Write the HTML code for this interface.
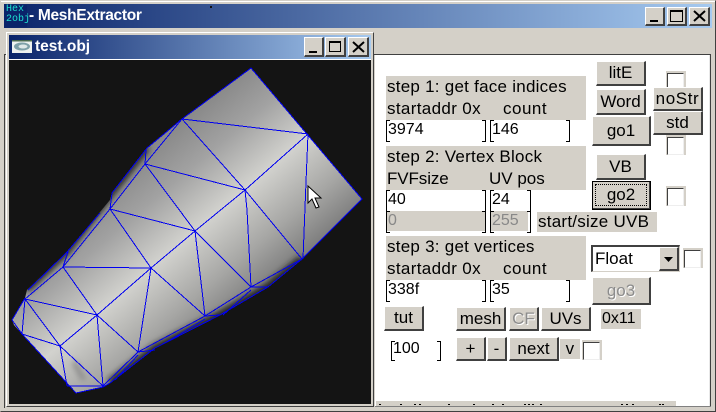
<!DOCTYPE html>
<html><head><meta charset="utf-8">
<style>
html,body{margin:0;padding:0;width:716px;height:412px;overflow:hidden;background:#d4d0c8}
*{box-sizing:border-box}
body{font-family:"Liberation Sans",sans-serif;color:#000;position:relative}
div,span{position:absolute}
.t{white-space:nowrap;font-size:17px;line-height:22px;letter-spacing:.25px}
.g{background:#d4d0c8}
.b{background:#d4d0c8;border-top:1px solid #fff;border-left:1px solid #fff;border-right:2px solid #404040;border-bottom:2px solid #404040;text-align:center;font-size:17px;white-space:nowrap;display:flex;align-items:center;justify-content:center}
.i{background:#fff;height:20px;font-size:16px;line-height:20px;padding-left:2px}
.i:before,.i:after{content:"";position:absolute;top:0;height:100%;width:3px;border-top:1px solid #000;border-bottom:1px solid #000}
.i:before{left:0;border-left:1px solid #000}
.i:after{right:0;border-right:1px solid #000}
.c{width:20px;height:20px;background:#d4d0c8}
.c:after{content:"";position:absolute;left:1px;top:2px;width:15px;height:16px;background:#fff;border-top:1px solid #404040;border-left:1px solid #404040;border-right:1px solid #eee;border-bottom:1px solid #eee}
.w{background:#d4d0c8;border-top:1px solid #fff;border-left:1px solid #fff;border-right:2px solid #404040;border-bottom:2px solid #404040;display:block}
.d{width:2px;height:1px;background:#000;top:404px}
</style></head>
<body>
<!-- main frame -->
<div style="left:0;top:0;width:716px;height:412px;border:1px solid;border-color:#d4d0c8 #404040 #404040 #d4d0c8;background:#d4d0c8"></div>
<div style="left:1px;top:1px;width:714px;height:1px;background:#fff"></div>
<div style="left:4px;top:4px;width:708px;height:24px;background:linear-gradient(90deg,#0a246a,#a6caf0)"></div>
<div style="left:210px;top:6px;width:2px;height:2px;background:#111"></div>
<div style="left:6px;top:5px;width:21px;height:22px;background:#0a246a;font:10px/10px 'Liberation Mono',monospace;color:#1de0d0">Hex<br>2obj</div>
<div class="t" style="left:29px;top:5px;font-size:15.5px;font-weight:bold;color:#fff;line-height:22px;letter-spacing:-.3px">- MeshExtractor</div>
<!-- main caption btns -->
<div class="w" style="left:645px;top:7px;width:20px;height:19px"><span style="left:4px;top:12px;width:8px;height:2px;background:#000"></span></div>
<div class="w" style="left:667px;top:7px;width:20px;height:19px"><span style="left:2px;top:2px;width:13px;height:12px;border:1px solid #000;border-top-width:2px"></span></div>
<div class="w" style="left:689px;top:7px;width:21px;height:19px"><svg style="position:absolute;left:3px;top:2px" width="13" height="12"><path d="M1 1L12 11M12 1L1 11" stroke="#000" stroke-width="2"/></svg></div>
<!-- inner borders -->
<div style="left:4px;top:54px;width:706px;height:1px;background:#404040"></div>
<div style="left:4px;top:54px;width:1px;height:354px;background:#404040"></div>
<!-- client -->
<div style="left:375px;top:55px;width:334px;height:351px;background:#fff"></div>
<div style="left:709px;top:55px;width:1px;height:351px;background:#e8e8e8"></div>
<div style="left:710px;top:54px;width:1px;height:353px;background:#404040"></div>
<div style="left:375px;top:406px;width:336px;height:1px;background:#808080"></div>
<!-- child window -->
<div style="left:6px;top:32px;width:368px;height:375px;background:#d4d0c8;border-top:1px solid #fff;border-left:1px solid #fff;border-right:1px solid #404040;border-bottom:1px solid #404040"></div>
<div style="left:9px;top:35px;width:362px;height:24px;background:linear-gradient(90deg,#0a246a,#a6caf0)"></div>
<div style="left:9px;top:59px;width:362px;height:1px;background:#fff"></div>
<svg style="position:absolute;left:12px;top:40px" width="20" height="13"><rect width="20" height="13" fill="#eef2f0"/><rect width="20" height="1.5" fill="#4a6a50"/><ellipse cx="10" cy="6.5" rx="8" ry="4" fill="#7ea0a8"/><ellipse cx="11" cy="6.5" rx="4.5" ry="2" fill="#dfe8e8"/></svg>
<div class="t" style="left:35px;top:36px;font-size:15.5px;font-weight:bold;color:#fff;line-height:22px;letter-spacing:0">test.obj</div>
<div class="w" style="left:304px;top:37px;width:20px;height:20px"><span style="left:4px;top:13px;width:8px;height:2px;background:#000"></span></div>
<div class="w" style="left:325px;top:37px;width:21px;height:20px"><span style="left:3px;top:3px;width:12px;height:11px;border:1px solid #000;border-top-width:2px"></span></div>
<div class="w" style="left:348px;top:37px;width:21px;height:20px"><svg style="position:absolute;left:3px;top:3px" width="13" height="12"><path d="M1 1L12 11M12 1L1 11" stroke="#000" stroke-width="2"/></svg></div>
<!-- canvas -->
<svg style="position:absolute;left:9px;top:60px" width="362" height="344" viewBox="9 60 362 344">
<defs>
<linearGradient id="m" gradientUnits="userSpaceOnUse" x1="124" y1="147" x2="266" y2="315">
<stop offset="0" stop-color="#787878"/><stop offset=".09" stop-color="#8a8a8a"/><stop offset=".27" stop-color="#a2a2a2"/><stop offset=".5" stop-color="#d2d2ce"/><stop offset=".73" stop-color="#a6a6a4"/><stop offset=".91" stop-color="#7c7c7c"/><stop offset="1" stop-color="#686868"/>
</linearGradient>
<clipPath id="cp"><path d="M251 68L362 199L302 259L268 287L220 315L155 348L110 383L103 387L76 393L22 334L14 325L12 320L25 298L27 290L67 252L110 200L112 193L147 148L182 119Z"/></clipPath>
<filter id="bl" x="-20%" y="-20%" width="140%" height="140%"><feGaussianBlur stdDeviation="3"/></filter>
</defs>
<rect x="9" y="60" width="362" height="344" fill="#141414"/>
<path d="M251 68L362 199L302 259L268 287L220 315L155 348L110 383L103 387L76 393L22 334L14 325L12 320L25 298L27 290L67 252L110 200L112 193L147 148L182 119Z" fill="url(#m)"/>
<g clip-path="url(#cp)" filter="url(#bl)" fill="none" stroke="#222">
<path d="M110 383L155 348L220 315L268 287L302 259" stroke-width="8"/>
<path d="M147 148L112 193L67 252L27 290" stroke-width="6"/>
<path d="M74 362L84 380" stroke-width="5" stroke="#8a8a8a"/>
</g>
<g fill="none" stroke="#0000f0" stroke-width="1" shape-rendering="crispEdges">
<path d="M182 119L251 68L362 199L302 259L268 287L220 315L155 348L110 383L103 387L76 393L22 334L12 320L25 298"/>
<path d="M182 119L147 148L112 193L110 209M28 290L67 252L100 213"/>
<path d="M182 119L308 134M182 119L245 190M308 134L245 190M308 134L306 182L303 259M145 164L182 119M145 164L245 190M145 164L110 209M145 164L195 231M146 150L145 164"/>
<path d="M245 190L195 231M245 190L247 210L251 287M245 190L302 259M110 209L195 231M110 209L151 268M195 231L151 268M195 231L251 287M195 231L205 316"/>
<path d="M63 267L151 268M63 267L110 209M63 267L97 315M151 268L97 315M151 268L138 352M151 268L205 316M25 299L63 267M25 299L97 315M25 299L60 346M25 299L22 334M22 334L60 346M97 315L60 346M97 315L138 352M97 315L103 386M60 346L67 386M60 346L103 386M67 386L103 386M138 352L103 386"/>
<path d="M205 316L138 352M251 287L205 316M302 259L251 287M251 287L268 287M205 316L220 315M138 352L155 350M68 252L63 267M223 315L251 290M165 343L205 319M115 380L138 355"/>
</g>
<path d="M308 186L308 203L312 199L316 208L319 207L315 198L321 198Z" fill="#fff" stroke="#000" stroke-width="1"/>
</svg>

<!-- step labels -->
<div class="g" style="left:386px;top:76px;width:200px;height:44px"></div>
<div class="t" style="left:387px;top:76px">step 1: get face indices</div>
<div class="t" style="left:387px;top:98px;letter-spacing:.35px">startaddr 0x</div>
<div class="t" style="left:503px;top:98px;letter-spacing:.5px">count</div>
<div class="i" style="left:386px;top:120px;width:100px">3974</div>
<div class="i" style="left:490px;top:120px;width:80px">146</div>

<div class="g" style="left:386px;top:146px;width:200px;height:44px"></div>
<div class="t" style="left:387px;top:146px">step 2: Vertex Block</div>
<div class="t" style="left:387px;top:168px;letter-spacing:-.1px">FVFsize</div>
<div class="t" style="left:489px;top:168px;letter-spacing:0">UV pos</div>
<div class="i" style="left:386px;top:190px;width:100px">40</div>
<div class="i" style="left:490px;top:190px;width:41px">24</div>

<div class="i" style="left:386px;top:211px;width:100px;background:#d4d0c8;color:#888">0</div>
<div class="i" style="left:490px;top:211px;width:41px;background:linear-gradient(90deg,#d4d0c8 93%,#fff 93%);color:#888">255</div>
<div class="g t" style="left:537px;top:212px;width:120px;height:20px;line-height:20px;padding-left:1px">start/size UVB</div>

<div class="g" style="left:386px;top:236px;width:200px;height:44px"></div>
<div class="t" style="left:387px;top:236px">step 3: get vertices</div>
<div class="t" style="left:387px;top:258px;letter-spacing:.35px">startaddr 0x</div>
<div class="t" style="left:503px;top:258px;letter-spacing:.5px">count</div>
<div class="i" style="left:386px;top:280px;width:100px">338f</div>
<div class="i" style="left:490px;top:280px;width:80px">35</div>

<!-- right buttons -->
<div class="b" style="left:596px;top:61px;width:50px;height:25px">litE</div>
<div class="b" style="left:596px;top:89px;width:50px;height:26px">Word</div>
<div class="b" style="left:592px;top:116px;width:59px;height:30px">go1</div>
<div class="b" style="left:596px;top:154px;width:50px;height:26px">VB</div>
<div class="b" style="left:592px;top:181px;width:59px;height:29px;outline:1px solid #000;outline-offset:-1px">go2<span style="left:2px;top:2px;right:2px;bottom:2px;border:1px dotted #000"></span></div>
<div class="c" style="left:666px;top:71px"></div>
<div class="b" style="left:653px;top:87px;width:50px;height:24px;letter-spacing:.6px">noStr</div>
<div class="b" style="left:653px;top:111px;width:50px;height:24px">std</div>
<div class="c" style="left:666px;top:135px"></div>
<div class="c" style="left:666px;top:186px"></div>

<!-- select -->
<div style="left:591px;top:245px;width:89px;height:27px;background:#fff;border-top:2px solid #404040;border-left:2px solid #404040;border-right:1px solid #d4d0c8;border-bottom:1px solid #d4d0c8;font-size:17px;line-height:24px;padding-left:2px">Float</div>
<div class="b" style="left:659px;top:247px;width:20px;height:24px"><svg width="10" height="6" style="position:absolute;left:4px;top:9px"><path d="M0 0H9L4.5 5Z" fill="#000"/></svg></div>
<div class="c" style="left:683px;top:248px"></div>

<div class="b" style="left:592px;top:277px;width:59px;height:28px;color:#8c8c8c;text-shadow:1px 1px 0 #fff">go3</div>
<div class="b" style="left:384px;top:306px;width:40px;height:25px">tut</div>
<div class="b" style="left:456px;top:307px;width:50px;height:24px">mesh</div>
<div class="b" style="left:509px;top:307px;width:30px;height:24px;color:#8c8c8c;text-shadow:1px 1px 0 #fff">CF</div>
<div class="b" style="left:541px;top:307px;width:50px;height:24px">UVs</div>
<div class="g t" style="left:601px;top:309px;width:40px;height:20px;line-height:20px;font-size:16px;padding-left:1px;letter-spacing:0">0x11</div>

<div class="i" style="left:391px;top:341px;width:50px;height:18px;font-size:16px;line-height:16px">100</div>
<div class="b" style="left:456px;top:337px;width:30px;height:24px">+</div>
<div class="b" style="left:487px;top:337px;width:20px;height:24px">-</div>
<div class="b" style="left:509px;top:337px;width:50px;height:24px">next</div>
<div class="g t" style="left:560px;top:339px;width:20px;height:20px;line-height:20px;text-align:center">v</div>
<div class="c" style="left:582px;top:340px"></div>

<!-- clipped bottom label -->
<div style="left:376px;top:401px;width:300px;height:5px;background:#d4d0c8"></div>
<div class="d" style="left:379px"></div><div class="d" style="left:400px"></div><div class="d" style="left:414px"></div><div class="d" style="left:419px"></div><div class="d" style="left:448px"></div><div class="d" style="left:473px"></div><div class="d" style="left:492px"></div><div class="d" style="left:502px"></div><div class="d" style="left:524px"></div><div class="d" style="left:528px"></div><div class="d" style="left:532px"></div><div class="d" style="left:540px"></div><div class="d" style="left:621px"></div><div class="d" style="left:626px"></div><div class="d" style="left:632px"></div><div class="d" style="left:659px"></div><div class="d" style="left:662px"></div>
</body></html>
